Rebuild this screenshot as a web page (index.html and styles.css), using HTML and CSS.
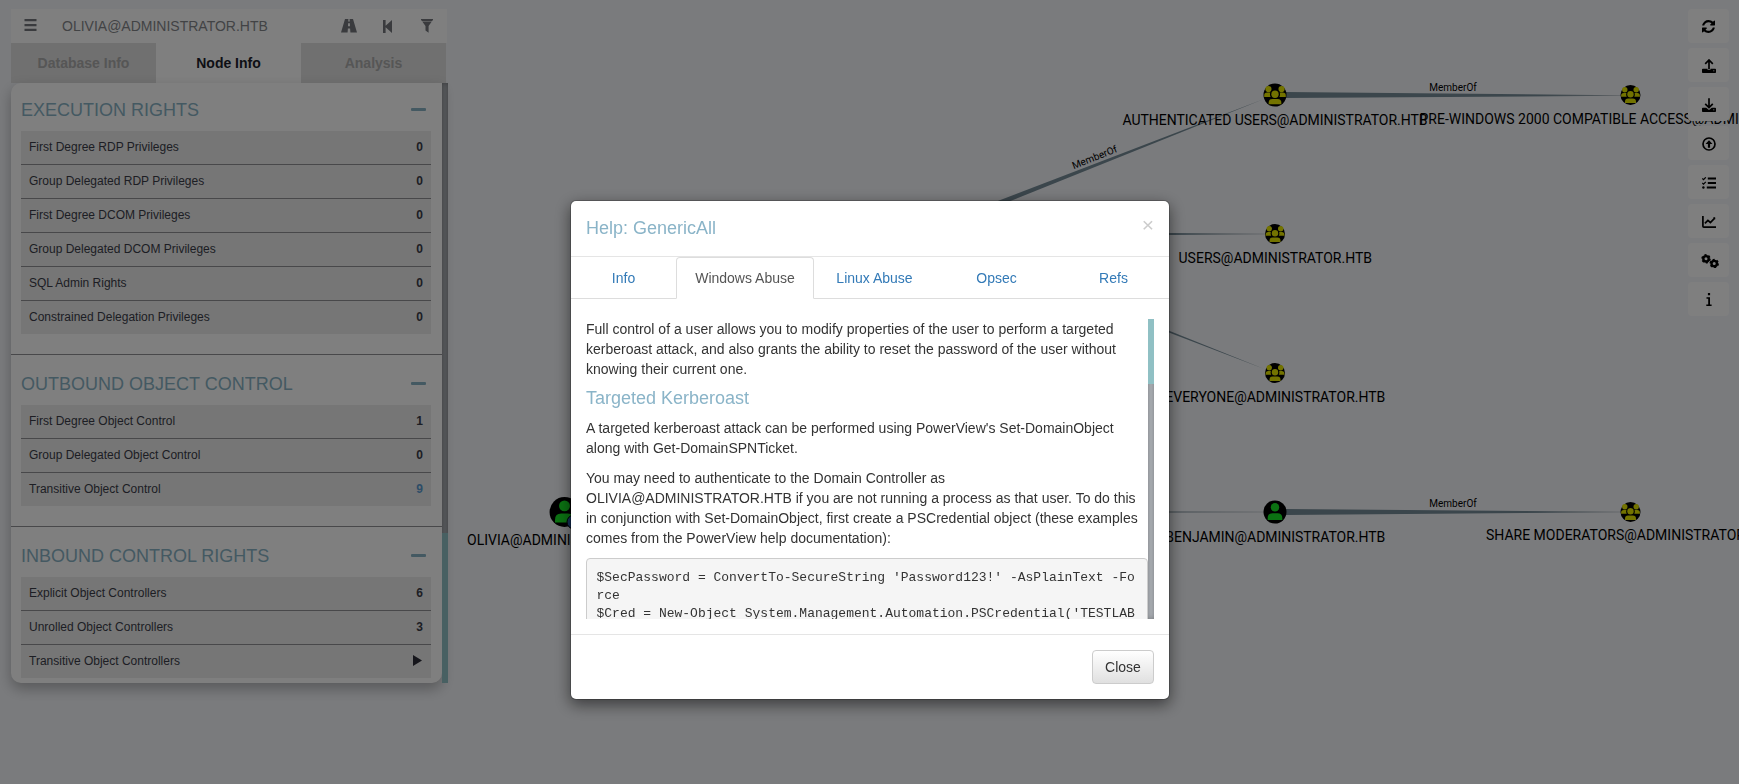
FILE: index.html
```html
<!DOCTYPE html>
<html lang="en">
<head>
<meta charset="utf-8">
<title>BloodHound</title>
<link rel="stylesheet" href="styles.css">
</head>
<body>
<svg class="graph" viewBox="0 0 1739 784" width="1739" height="784">
  <defs>
    <linearGradient id="fade" x1="0" x2="1" y1="0" y2="0"><stop offset="0" stop-color="#768c98"/><stop offset=".75" stop-color="#768c98"/><stop offset="1" stop-color="#a9b2b9"/></linearGradient>
    <g id="group">
      <circle r="10"/>
      <g fill="#e6e600">
        <circle cx="-5.700" cy="-5.200" r="2.700"/><circle cx="5.700" cy="-5.200" r="2.700"/>
        <path d="M-9.400 1.800v-1.400q0-2.500 2.600-2.500h2.700q-.7 2 .3 3.900zM9.400 1.800v-1.400q0-2.500-2.600-2.500h-2.700q.7 2-.3 3.900z"/>
        <circle cy="-.7" r="3.200"/>
        <path d="M-5.500 8v-1.300q0-3.200 3.200-3.200h4.600q3.200 0 3.200 3.200v1.300z"/>
      </g>
    </g>
    <g id="user">
      <circle r="11.5"/>
      <g fill="#17e625"><circle cy="-4.700" r="4.200"/><path d="M-7.300 8v-2q0-4.800 4.800-4.800h5q4.800 0 4.800 4.800v2z"/></g>
    </g>
  </defs>
  <g fill="url(#fade)">
    <path d="M918.900 231.200L1264 99.100L921.100 236.800z" fill="#768c98"/>
    <path d="M1286 92L1621 95.200v.6L1286 98z"/>
    <path d="M920 231L1265 233.700v.6L920 237z"/>
    <path d="M921.100 231.200L1265 369.300L918.900 236.800z" fill="#768c98"/>
    <path d="M580 509L1264 511.700v.6L580 515z"/>
    <path d="M1286 509L1621 511.700v.6L1286 515z"/>
  </g>
  <use href="#group" transform="translate(1275 95) scale(1.150)"/>
  <use href="#group" x="1630.500" y="95"/>
  <use href="#group" x="1275" y="234"/>
  <use href="#group" x="1275" y="373"/>
  <use href="#user" x="1275" y="512"/>
  <use href="#group" x="1630.500" y="512"/>
  <use href="#user" transform="translate(564.500 512) scale(1.300)"/>
  <circle cx="574" cy="522" r="7" fill="#2a63b5" stroke="#000"/>
  <g class="node-label">
    <text x="1275" y="125" textLength="305">AUTHENTICATED USERS@ADMINISTRATOR.HTB</text>
    <text x="1419.500" y="124" class="from-start">PRE-WINDOWS 2000 COMPATIBLE ACCESS@ADMINISTRATOR.HTB</text>
    <text x="1275.300" y="263" textLength="193.500">USERS@ADMINISTRATOR.HTB</text>
    <text x="1275.300" y="402" textLength="220">EVERYONE@ADMINISTRATOR.HTB</text>
    <text x="1275.300" y="542" textLength="220">BENJAMIN@ADMINISTRATOR.HTB</text>
    <text x="1486" y="540" class="from-start">SHARE MODERATORS@ADMINISTRATOR.HTB</text>
    <text x="467" y="545" class="from-start">OLIVIA@ADMINISTRATOR.HTB</text>
  </g>
  <g class="edge-label">
    <text x="1453" y="91">MemberOf</text>
    <text x="1453" y="507">MemberOf</text>
    <text transform="translate(1095.800 160.500) rotate(-21.400)">MemberOf</text>
  </g>
</svg>

<aside class="side">
  <header class="search">
    <svg class="menu-icon" viewBox="0 0 12 12"><path d="M0 0h12v2.300H0zM0 4.900h12v2.300H0zM0 9.700h12v2.300H0z"/></svg>
    <span class="query">OLIVIA@ADMINISTRATOR.HTB</span>
    <svg class="road" viewBox="0 0 16 14"><path d="M4 0h3.400l-.2 2.500h1.600L8.600 0H12l4 13.500H9.400L9.100 9.500H6.900l-.3 4H0zM7.100 4.200L7 7.300h2l-.1-3.100z"/></svg>
    <svg class="back" viewBox="0 0 9 13"><path d="M0 0h2.600v5.800L9 0v13L2.600 7.200V13H0z"/></svg>
    <svg class="filter" viewBox="0 0 12 14"><path d="M0 0h12v1L11 2H1L0 1zM1.200 2.600h9.600L7.600 7v6.800L4.500 11.400V7z"/></svg>
  </header>
  <nav class="side-tabs"><span>Database Info</span><span class="on">Node Info</span><span>Analysis</span></nav>
  <div class="panel">
    <div class="panel-body">
      <section>
        <h4>EXECUTION RIGHTS<i></i></h4>
        <ul>
          <li>First Degree RDP Privileges<b>0</b></li>
          <li>Group Delegated RDP Privileges<b>0</b></li>
          <li>First Degree DCOM Privileges<b>0</b></li>
          <li>Group Delegated DCOM Privileges<b>0</b></li>
          <li>SQL Admin Rights<b>0</b></li>
          <li>Constrained Delegation Privileges<b>0</b></li>
        </ul>
      </section>
      <section>
        <h4>OUTBOUND OBJECT CONTROL<i></i></h4>
        <ul>
          <li>First Degree Object Control<b>1</b></li>
          <li>Group Delegated Object Control<b>0</b></li>
          <li>Transitive Object Control<b class="link">9</b></li>
        </ul>
      </section>
      <section>
        <h4>INBOUND CONTROL RIGHTS<i></i></h4>
        <ul>
          <li>Explicit Object Controllers<b>6</b></li>
          <li>Unrolled Object Controllers<b>3</b></li>
          <li>Transitive Object Controllers<svg class="play" viewBox="0 0 9 11"><path d="M0 0L9 5.500L0 11z"/></svg></li>
        </ul>
      </section>
    </div>
    <div class="scroll"><div class="thumb"></div></div>
  </div>
</aside>

<div class="tools">
  <button><svg viewBox="0 0 1536 1536" width="13" height="13"><path d="M1511 928q0 5-1 7-64 268-268 434.500t-478 166.500q-146 0-282.500-55t-243.500-157l-129 129q-19 19-45 19t-45-19-19-45v-448q0-26 19-45t45-19h448q26 0 45 19t19 45-19 45l-137 137q71 66 161 102t187 36q134 0 250-65t186-179q11-17 53-117 8-23 30-23h192q13 0 22.500 9.500t9.500 22.500zm25-800v448q0 26-19 45t-45 19h-448q-26 0-45-19t-19-45 19-45l138-138q-148-137-349-137-134 0-250 65t-186 179q-11 17-53 117-8 23-30 23h-199q-13 0-22.500-9.500t-9.500-22.500v-7q65-268 270-434.500t480-166.500q146 0 284 55.500t245 156.500l130-129q19-19 45-19t45 19 19 45z"/></svg></button>
  <button><svg viewBox="0 0 14 14" width="14" height="14"><path d="M.8 9.800h4.700v1h3v-1h4.700q.8 0 .8.800v2.600q0 .8-.8.800H.8q-.8 0-.8-.8v-2.600q0-.8.800-.8z"/><path class="ln" d="M7 10V1.200M3.200 4.800L7 1l3.800 3.800"/><path class="dot" d="M11.300 11.800h1"/></svg></button>
  <button><svg viewBox="0 0 14 14" width="14" height="14"><path d="M.8 9.800h3.400L7 12l2.800-2.200h3.400q.8 0 .8.800v2.600q0 .8-.8.800H.8q-.8 0-.8-.8v-2.600q0-.8.800-.8z"/><path class="ln" d="M7 .3v9.200M3.200 5.800L7 9.600l3.800-3.800"/><path class="dot" d="M11.300 11.800h1"/></svg></button>
  <button><svg viewBox="0 0 14 14" width="14" height="14"><circle class="ln" cx="7" cy="7" r="6"/><path d="M7 3.200l3.500 3.900H8.100v3.600H5.900V7.100H3.500z"/></svg></button>
  <button><svg viewBox="0 0 14 12" width="14" height="12"><path d="M5.800 .6H14v1.800H5.800zM5.800 5.100H14v1.800H5.800zM4.800 9.600H14v1.800H4.800z"/><circle cx="1.400" cy="10.500" r="1.200"/><path class="tick" d="M.3 1.500l1.200 1.100L3.800 .3M.3 6l1.200 1.100L3.800 4.800"/></svg></button>
  <button><svg viewBox="0 0 14 12" width="14" height="12"><path class="ln" d="M.9 0v10.200q0 .9.900.9H14M2.900 7.400l3-3 2.500 2.100 4.300-4.300"/><path d="M11 1.200h2.200v2.200z"/></svg></button>
  <button><svg class="cogs" viewBox="0 0 18 14" width="18" height="14"><g class="gear"><circle cx="5" cy="4.800" r="2.700"/><circle class="teeth" cx="5" cy="4.800" r="4"/><circle cx="13.200" cy="9.600" r="2.700"/><circle class="teeth" cx="13.200" cy="9.600" r="4"/></g></svg></button>
  <button><svg viewBox="0 0 6 13" width="6" height="13"><path d="M1.900 0h2.200v2.200H1.900zM.5 4.300h3.500v7.200h1.600V13H.3v-1.500h1.900V5.800H.5z"/></svg></button>
</div>

<div class="backdrop">
  <div class="modal">
    <header class="modal-head"><h4>Help: GenericAll</h4><span class="x">×</span></header>
    <nav class="tabs"><a>Info</a><a class="active">Windows Abuse</a><a>Linux Abuse</a><a>Opsec</a><a>Refs</a></nav>
    <div class="modal-body">
      <div class="copy">
        <p>Full control of a user allows you to modify properties of the user to perform a targeted kerberoast attack, and also grants the ability to reset the password of the user without knowing their current one.</p>
        <h4>Targeted Kerberoast</h4>
        <p>A targeted kerberoast attack can be performed using PowerView's Set-DomainObject along with Get-DomainSPNTicket.</p>
        <p>You may need to authenticate to the Domain Controller as OLIVIA@ADMINISTRATOR.HTB if you are not running a process as that user. To do this in conjunction with Set-DomainObject, first create a PSCredential object (these examples comes from the PowerView help documentation):</p>
        <pre>$SecPassword = ConvertTo-SecureString 'Password123!' -AsPlainText -Force
$Cred = New-Object System.Management.Automation.PSCredential('TESTLAB</pre>
      </div>
      <div class="scroll"><div class="thumb"></div></div>
    </div>
    <footer class="modal-foot"><button class="close-btn">Close</button></footer>
  </div>
</div>
</body>
</html>
```
FILE: styles.css
```css
* { box-sizing: border-box; }
html, body { height: 100%; overflow: hidden; }
body {
  margin: 0;
  padding: 9px 10px 0 11px;
  display: flex;
  justify-content: space-between;
  align-items: flex-start;
  background: #f5f7fb;
  font: 14px/20px "Liberation Sans", Arial, sans-serif;
  color: #333;
}
h4, p, ul, pre { margin: 0; }
.graph { position: absolute; left: 0; top: 0; }
.node-label, .edge-label { font-family: Roboto, sans-serif; text-anchor: middle; fill: #000; }
.node-label { font-size: 14px; }
.edge-label { font-size: 10px; }
.from-start { text-anchor: start; }

.side { position: relative; width: 437px; }
.search {
  height: 34px;
  width: 436px;
  background: #fff;
  display: flex;
  align-items: center;
  padding: 0 14px 0 13px;
  color: #85878b;
}
.search svg { fill: #74777d; flex: none; }
.search .menu-icon { width: 13px; height: 12px; margin-top: -2px; }
.query { margin-left: 25px; flex: 1; font-size: 14px; }
.road { width: 16px; height: 14px; }
.back { width: 9px; height: 13px; margin-left: 26px; }
.search .filter { width: 12px; height: 14px; margin-left: 29px; margin-right: -.4px; }
.side-tabs { height: 40px; width: 435px; display: grid; grid-template-columns: repeat(3, 1fr); font-weight: bold; }
.side-tabs span { background: #e0e0e0; color: #acacac; text-align: center; line-height: 40px; }
.side-tabs .on { background: #fff; color: #1c1e2b; }
.panel { display: flex; height: 600px; }
.panel-body {
  width: 431px;
  background: #fff;
  border-radius: 10px;
  border-top-right-radius: 0;
  overflow: hidden;
  box-shadow: 0 6px 14px rgba(0, 0, 0, .28);
}
.panel section { height: 172px; border-bottom: 1px solid #909095; padding: 18px 11px 0 10px; }
.panel section:first-child { height: 272px; padding-top: 16px; }
.panel section:last-child { border: 0; }
.panel h4 {
  height: 32px;
  padding-right: 5px;
  display: flex;
  justify-content: space-between;
  font-weight: normal;
  font-size: 18px;
  line-height: 22px;
  color: #88b3c5;
}
.panel h4 i { width: 15px; height: 3px; margin-top: 9px; border-radius: 1px; background: #88b3c5; }
.panel ul { padding: 0; list-style: none; }
.panel li {
  height: 34px;
  display: flex;
  justify-content: space-between;
  align-items: center;
  padding: 0 8px 2px;
  font-size: 12px;
  line-height: 30px;
  background: #ececec;
  border-bottom: 1px solid #909095;
  color: #3b3d49;
}
.panel li:last-child { height: 33px; border: 0; }
.panel .link { color: #5b9bd0; }
.play { width: 9px; height: 11px; fill: #2c2d38; margin-right: 1px; }
.scroll { width: 6px; display: flex; flex-direction: column; background: #b2b6bc; box-shadow: inset 0 0 5px rgba(0, 0, 0, .35); }
.thumb { background: #90c0c4; }
.panel .thumb { height: 150px; margin-top: auto; }

.tools { position: relative; display: grid; gap: 5px; }
.tools button {
  width: 41px;
  height: 34px;
  padding: 1px 0 0;
  border: 0;
  border-radius: 4px;
  background: #fff;
  display: grid;
  place-items: center;
}
.tools .cogs { margin-left: 2px; }
.ln { fill: none; stroke: #000; stroke-width: 1.7; }
.tick { fill: none; stroke: #000; stroke-width: 1.2; }
.dot { stroke: #fff; stroke-width: 1; }
.gear circle { fill: none; stroke: #000; stroke-width: 2.4; }
.gear .teeth { stroke-width: 1.500; stroke-dasharray: 2.1 2.09; }

.backdrop {
  position: fixed;
  inset: 0;
  display: flex;
  align-items: flex-start;
  padding: 200px 0 0 570px;
  background: rgba(0, 0, 0, .5);
}
.modal {
  width: 600px;
  height: 500px;
  display: flex;
  flex-direction: column;
  background: #fff;
  background-clip: padding-box;
  border: 1px solid rgba(0, 0, 0, .2);
  border-radius: 6px;
  box-shadow: 0 5px 15px rgba(0, 0, 0, .5);
}
.modal-head { height: 56px; padding: 15px; display: flex; justify-content: space-between; border-bottom: 1px solid #e5e5e5; }
.modal h4 { font-size: 18px; font-weight: normal; line-height: 25px; color: #8ab4c8; }
.x { font-size: 21px; line-height: 18px; color: #ccc; }
.tabs { height: 42px; display: grid; grid-template-columns: 105px 138px 121px 123px 111px; border-bottom: 1px solid #ddd; }
.tabs a { height: 42px; padding: 11px 0 0; text-align: center; color: #337ab7; }
.tabs .active { color: #555; background: #fff; border: 1px solid #ddd; border-bottom-color: #fff; border-radius: 4px 4px 0 0; padding-top: 10px; }
.modal-body { height: 335px; padding: 20px 15px 15px; display: flex; }
.copy { width: 562px; height: 300px; overflow: hidden; }
.copy p { margin-bottom: 10px; }
.modal .copy h4 { line-height: 20px; margin: -1px 0 10px; }
.copy pre {
  width: 562px;
  height: 100px;
  padding: 9.5px;
  background: #f5f5f5;
  border: 1px solid #ccc;
  border-radius: 4px;
  font: 13px/18px "Liberation Mono", monospace;
  white-space: pre-wrap;
  word-break: break-all;
}
.modal-body .thumb { height: 65px; }
.modal-foot { height: 65px; border-top: 1px solid #e5e5e5; padding: 15px; display: flex; justify-content: flex-end; }
.close-btn {
  width: 62px;
  height: 34px;
  padding: 0;
  font: inherit;
  color: #333;
  border: 1px solid #ccc;
  border-radius: 4px;
  background: linear-gradient(#fff, #e0e0e0);
}
```
